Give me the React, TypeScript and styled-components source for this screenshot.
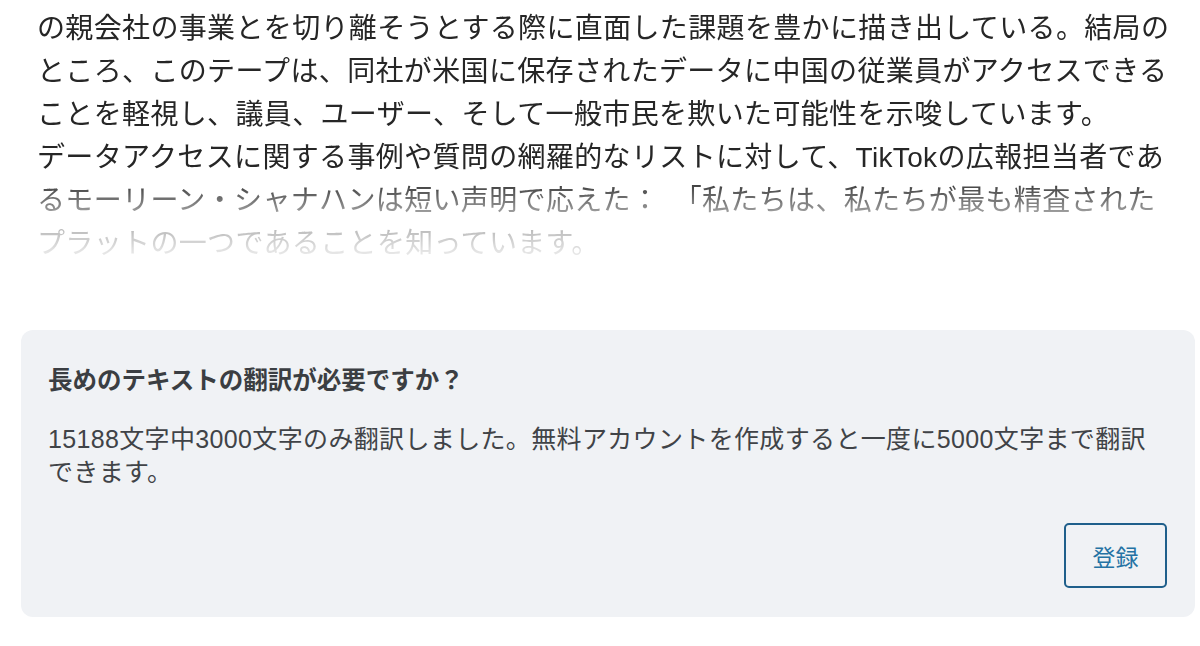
import styled, {createGlobalStyle} from "styled-components";

const GlobalStyle = createGlobalStyle`
    body {
        margin: 0;
        background: #ffffff;
        font-family: "Liberation Sans", "Noto Sans CJK JP", sans-serif;
    }
`;

const lines = [
    "の親会社の事業とを切り離そうとする際に直面した課題を豊かに描き出している。結局の",
    "ところ、このテープは、同社が米国に保存されたデータに中国の従業員がアクセスできる",
    "ことを軽視し、議員、ユーザー、そして一般市民を欺いた可能性を示唆しています。",
    "データアクセスに関する事例や質問の網羅的なリストに対して、TikTokの広報担当者であ",
    "るモーリーン・シャナハンは短い声明で応えた：　「私たちは、私たちが最も精査された",
    "プラットの一つであることを知っています。",
];

const App = () => {
    return (
        <Page>
            <GlobalStyle/>
            <Article>
                {lines.map((line, i) => (
                    <Line key={i}>{line}</Line>
                ))}
            </Article>

            <Prompt>
                <PromptTitle>長めのテキストの翻訳が必要ですか？</PromptTitle>
                <PromptText>
                    15188文字中3000文字のみ翻訳しました。無料アカウントを作成すると一度に5000文字まで翻訳<br/>
                    できます。
                </PromptText>
                <Actions>
                    <RegisterButton>登録</RegisterButton>
                </Actions>
            </Prompt>
        </Page>
    );
}

export default App;


const Page = styled.div`
    width: 1200px;
    height: 646px;
    overflow: hidden;
    padding-top: 7px;
    box-sizing: border-box;
`;

const Article = styled.div`
    padding-left: 37px;
    height: 265px;
    font-size: 28px;
    line-height: 43px;
    letter-spacing: 0.35px;
    color: #262626;
    -webkit-mask-image: linear-gradient(to bottom, #000 170px, rgba(0, 0, 0, .45) 205px, rgba(0, 0, 0, .12) 245px, transparent 275px);
    mask-image: linear-gradient(to bottom, #000 170px, rgba(0, 0, 0, .45) 205px, rgba(0, 0, 0, .12) 245px, transparent 275px);
`;

const Line = styled.div`
    white-space: nowrap;
`;

const Prompt = styled.div`
    margin: 58px 5px 0 21px;
    height: 287px;
    box-sizing: border-box;
    padding: 33px 28px 29px 27px;
    background: #f0f2f5;
    border-radius: 12px;
    display: flex;
    flex-direction: column;
`;

const PromptTitle = styled.div`
    font-size: 24.5px;
    line-height: 36px;
    font-weight: 700;
    color: #3b3e42;
`;

const PromptText = styled.div`
    margin-top: 24px;
    font-size: 25px;
    line-height: 33px;
    letter-spacing: 0.35px;
    color: #404347;
    white-space: nowrap;
`;

const Actions = styled.div`
    margin-top: auto;
    display: flex;
    justify-content: flex-end;
`;

const RegisterButton = styled.button`
    width: 103px;
    height: 65px;
    box-sizing: border-box;
    border: 2px solid #1f5f8b;
    border-radius: 5px;
    background: transparent;
    color: #2472a4;
    font-family: "Noto Sans CJK JP", sans-serif;
    font-size: 23px;
    cursor: pointer;
`;
